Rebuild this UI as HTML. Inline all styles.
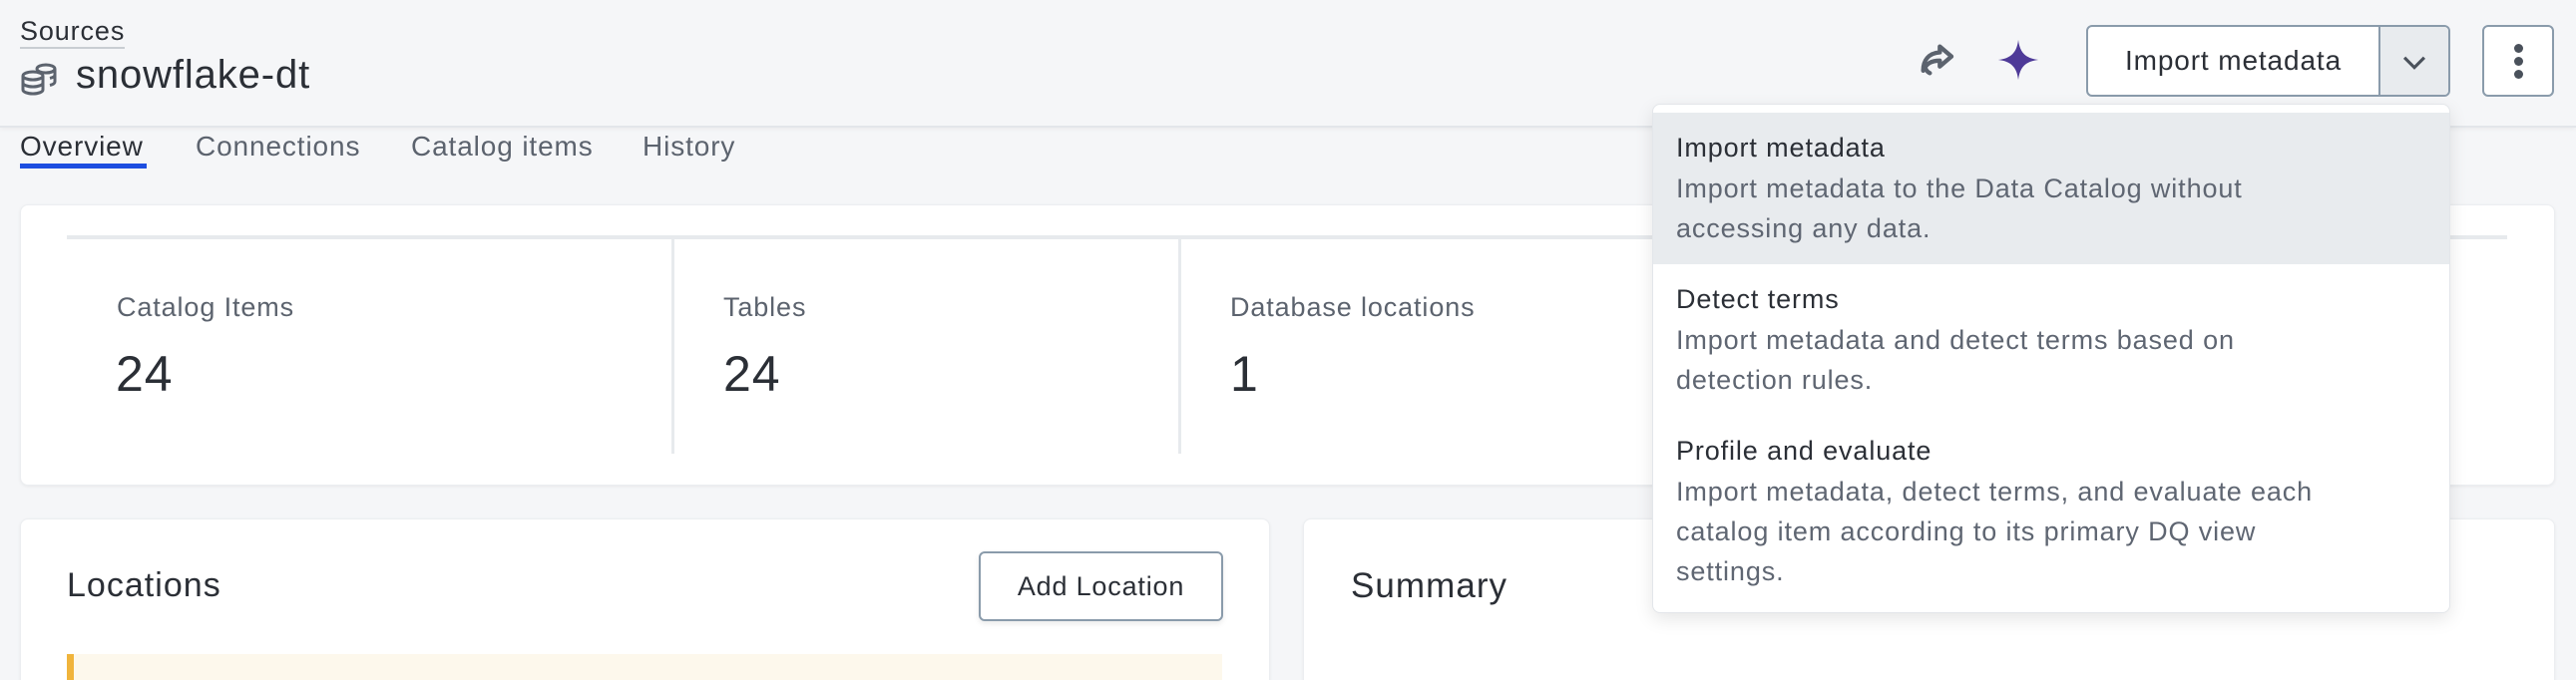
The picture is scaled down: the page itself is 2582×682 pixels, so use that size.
<!DOCTYPE html>
<html><head><meta charset="utf-8"><style>
*{box-sizing:border-box;margin:0;padding:0}
html,body{width:2582px;height:682px;overflow:hidden}
body{background:#f5f6f8;font-family:"Liberation Sans",sans-serif;color:#2b2f36;position:relative;letter-spacing:0.055em}
.abs{position:absolute}
.header{left:0;top:0;width:2582px;height:128px;background:#f5f6f8;border-bottom:2px solid #e3e6ea;box-shadow:0 2px 4px rgba(0,0,0,.04)}
.card{background:#fff;border-radius:8px;box-shadow:0 1px 3px rgba(0,0,0,.06);border:1px solid #eceef1}
.lbl{font-size:27px;color:#5c636e}
.num{font-size:50px;color:#2b2f36;letter-spacing:0.02em}
.tab{font-size:28px;color:#5c636e;top:131px}
.btn{background:#fff;border:2px solid #8a9bab;border-radius:6px}
.mi-t{font-size:27px;color:#2b2f36}
.mi-d{font-size:27px;color:#5f6672;line-height:40px}
</style></head><body>
<div class="abs header"></div>
<div class="abs" style="left:20px;top:17px;font-size:27px;color:#2b2f36;border-bottom:2px solid #c9cdd2;padding-bottom:2px;line-height:28px">Sources</div>
<svg class="abs" style="left:20px;top:62px" width="40" height="34" viewBox="0 0 40 34" fill="none" stroke="#5c636e" stroke-width="3">
<ellipse cx="13" cy="14" rx="10" ry="4"/><path d="M3 14v14c0 2.2 4.5 4 10 4s10-1.8 10-4V14M3 21c0 2.2 4.5 4 10 4s10-1.8 10-4"/>
<ellipse cx="26" cy="7" rx="9" ry="4"/><path d="M26 11c5 0 9-1.8 9-4v13c0 1.5-2 2.8-5 3.5M35 13c0 1.5-2 2.7-5 3.4"/></svg>
<div class="abs" style="left:76px;top:53px;font-size:40px;color:#2b2f36">snowflake-dt</div>
<div class="abs tab" style="left:20px;color:#2b2f36">Overview</div>
<div class="abs" style="left:20px;top:164px;width:127px;height:5px;background:#1d4ee0"></div>
<div class="abs tab" style="left:196px">Connections</div>
<div class="abs tab" style="left:412px">Catalog items</div>
<div class="abs tab" style="left:644px">History</div>

<div class="abs card" style="left:20px;top:205px;width:2541px;height:282px"></div>
<div class="abs" style="left:67px;top:236px;width:2446px;height:4px;background:#e7eaed"></div>
<div class="abs" style="left:673px;top:240px;width:3px;height:215px;background:#e7eaed"></div>
<div class="abs" style="left:1181px;top:240px;width:3px;height:215px;background:#e7eaed"></div>
<div class="abs lbl" style="left:117px;top:293px">Catalog Items</div>
<div class="abs num" style="left:116px;top:346px">24</div>
<div class="abs lbl" style="left:725px;top:293px">Tables</div>
<div class="abs num" style="left:725px;top:346px">24</div>
<div class="abs lbl" style="left:1233px;top:293px">Database locations</div>
<div class="abs num" style="left:1233px;top:346px">1</div>

<div class="abs card" style="left:20px;top:520px;width:1253px;height:180px"></div>
<div class="abs card" style="left:1306px;top:520px;width:1255px;height:180px"></div>
<div class="abs" style="left:67px;top:568px;font-size:34px;color:#2b2f36;letter-spacing:0.03em">Locations</div>
<div class="abs btn" style="left:981px;top:553px;width:245px;height:70px;font-size:27px;text-align:center;line-height:66px;box-shadow:0 3px 6px rgba(0,0,0,.08);letter-spacing:0.03em">Add Location</div>
<div class="abs" style="left:67px;top:656px;width:1158px;height:30px;background:#fdf8ec;border-left:7px solid #f0b43c"></div>
<div class="abs" style="left:1354px;top:568px;font-size:35px;color:#2b2f36;letter-spacing:0.03em">Summary</div>

<svg class="abs" style="left:1921px;top:40px" width="40" height="40" viewBox="0 0 24 24"><path d="M14 4l7 6-7 6v-3.5c-5 0-8 1.5-10 6 0-6 3-10.5 10-11z M8 20c-2-1-3-3-3-5" fill="none" stroke="#5c636e" stroke-width="2.6" stroke-linejoin="round" stroke-linecap="round"/></svg>
<svg class="abs" style="left:2001px;top:38px" width="44" height="44" viewBox="0 0 24 24"><path d="M12 1C12.8 8 16 11.2 23 12 16 12.8 12.8 16 12 23 11.2 16 8 12.8 1 12 8 11.2 11.2 8 12 1z" fill="#4e3a98"/></svg>
<div class="abs btn" style="left:2091px;top:25px;width:365px;height:72px;overflow:hidden">
 <div class="abs" style="left:0;top:0;width:291px;height:68px;text-align:center;line-height:68px;font-size:28px;color:#2b2f36">Import metadata</div>
 <div class="abs" style="left:291px;top:0;width:72px;height:68px;background:#e8ebee;border-left:2px solid #8a9bab"></div>
 <svg class="abs" style="left:310px;top:18px" width="34" height="34" viewBox="0 0 24 24"><path d="M5 9l7 7 7-7" fill="none" stroke="#4a515b" stroke-width="2.2"/></svg>
</div>
<div class="abs btn" style="left:2488px;top:25px;width:72px;height:72px">
 <div class="abs" style="left:30px;top:17px;width:9px;height:9px;border-radius:50%;background:#4a515b"></div>
 <div class="abs" style="left:30px;top:30px;width:9px;height:9px;border-radius:50%;background:#4a515b"></div>
 <div class="abs" style="left:30px;top:43px;width:9px;height:9px;border-radius:50%;background:#4a515b"></div>
</div>

<div class="abs" style="left:1656px;top:104px;width:800px;height:511px;background:#fff;border:1px solid #e3e6ea;border-radius:8px;box-shadow:0 6px 18px rgba(0,0,0,.10);overflow:hidden">
 <div class="abs" style="left:0;top:8px;width:800px;height:152px;background:#e8ebee"></div>
 <div class="abs mi-t" style="left:23px;top:28px">Import metadata</div>
 <div class="abs mi-d" style="left:23px;top:64px">Import metadata to the Data Catalog without<br>accessing any data.</div>
 <div class="abs mi-t" style="left:23px;top:180px">Detect terms</div>
 <div class="abs mi-d" style="left:23px;top:216px">Import metadata and detect terms based on<br>detection rules.</div>
 <div class="abs mi-t" style="left:23px;top:332px">Profile and evaluate</div>
 <div class="abs mi-d" style="left:23px;top:368px">Import metadata, detect terms, and evaluate each<br>catalog item according to its primary DQ view<br>settings.</div>
</div>
</body></html>
